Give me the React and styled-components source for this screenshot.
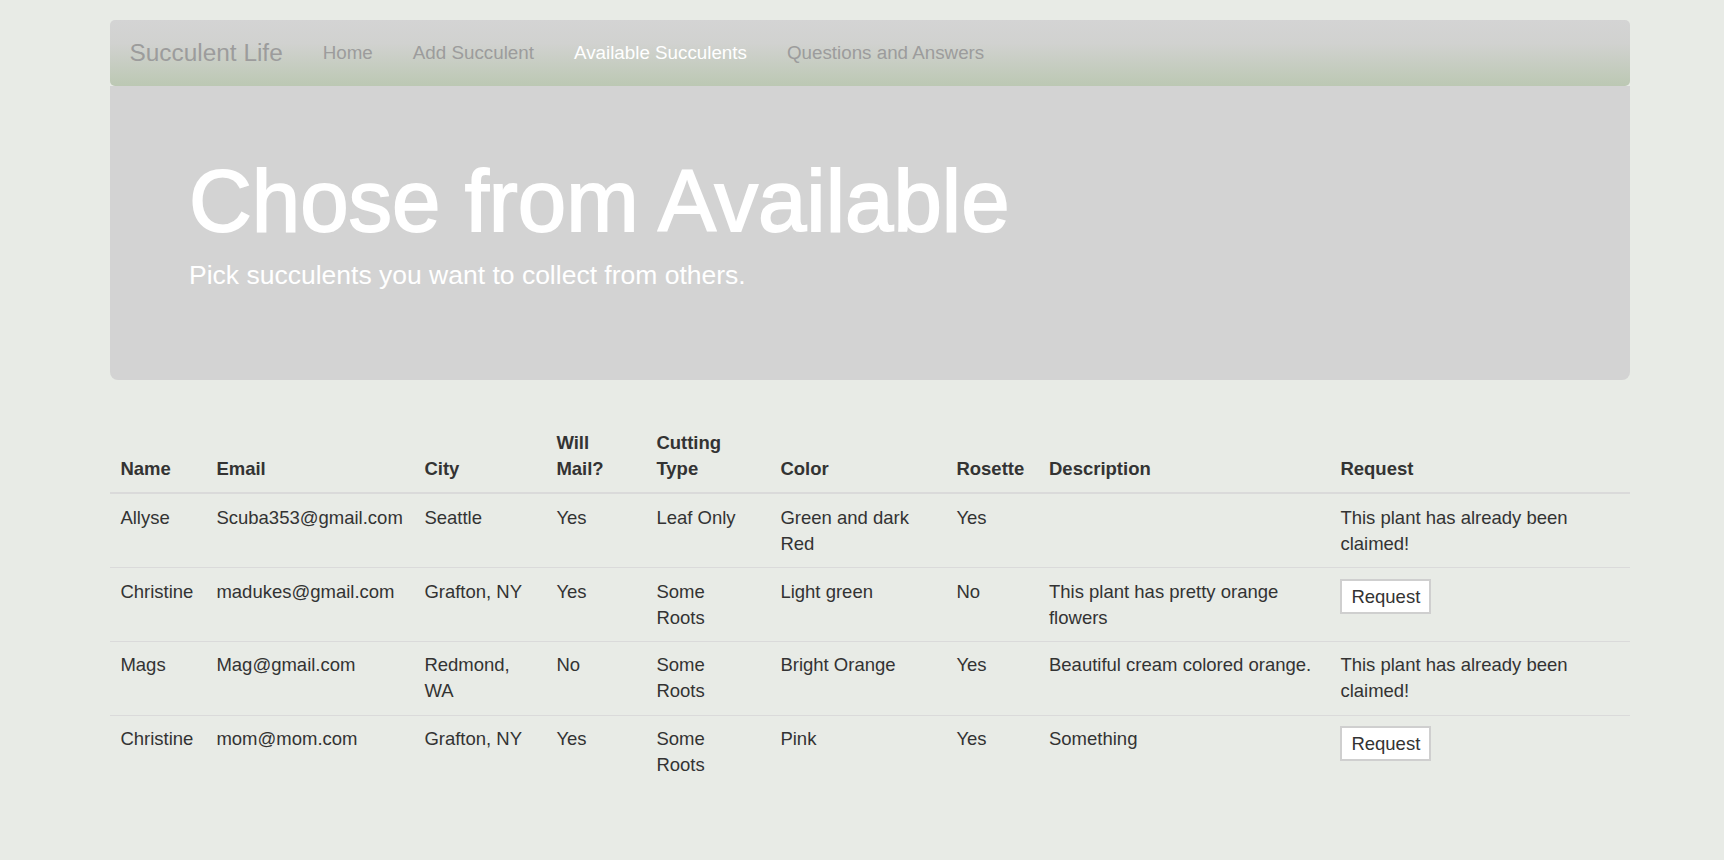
import React from 'react'
import styled, { createGlobalStyle } from 'styled-components'

const GlobalStyle = createGlobalStyle`
  body {
    margin: 0;
    background: #e8ebe6;
    font-family: "Liberation Sans", Arial, sans-serif;
    color: #333;
  }
`

const Container = styled.div`
  width: 1520px;
  margin-left: 110px;
  padding: 20px 0 60px;
`

const Navbar = styled.nav`
  display: flex;
  align-items: center;
  height: 66px;
  border-radius: 5px;
  background: linear-gradient(to bottom, #d4d4d4 0%, #d1d2d0 35%, #bcc8b3 100%);
`

const Brand = styled.a`
  padding: 0 20px 0 19.5px;
  font-size: 24.4px;
  line-height: 26px;
  color: #9c9c9c;
  text-decoration: none;
`

const NavLink = styled.a`
  padding: 0 20px;
  font-size: 18.8px;
  line-height: 26px;
  color: ${(p) => (p.$active ? '#fff' : '#9c9c9c')};
  text-decoration: none;
`

const Jumbotron = styled.header`
  padding: 68px 79px 85px;
  margin-bottom: 40px;
  background: #d3d3d3;
  border-radius: 0 0 8px 8px;
  color: #fff;
`

const Heading = styled.h1`
  margin: 0;
  font-size: 87px;
  line-height: 94px;
  font-weight: 400;
  -webkit-text-stroke: 1.8px #fff;
`

const Lead = styled.p`
  margin: 8px 0 0;
  font-size: 26.5px;
  line-height: 38.6px;
  font-weight: 300;
`

const Table = styled.table`
  width: 100%;
  border-collapse: collapse;
  table-layout: fixed;
  font-size: 18.5px;
  line-height: 26px;
`

const Th = styled.th`
  padding: 10.4px;
  text-align: left;
  vertical-align: bottom;
  font-weight: bold;
  border-bottom: 2px solid #dadada;
`

const Td = styled.td`
  padding: 10.4px ${(p) => p.$padRight || 10.4}px 10.4px 10.4px;
  vertical-align: top;
  border-top: 1px solid #dadada;
`

const RequestButton = styled.button`
  padding: 3px 9px;
  font: inherit;
  line-height: 25px;
  color: #333;
  background: #fff;
  border: 2px solid #cfcfcf;
  border-radius: 0;
`

const columns = [
  { key: 'name', label: 'Name', width: 96 },
  { key: 'email', label: 'Email', width: 208 },
  { key: 'city', label: 'City', width: 132 },
  { key: 'mail', label: 'Will Mail?', width: 100 },
  { key: 'cutting', label: 'Cutting Type', width: 124, padRight: 16 },
  { key: 'color', label: 'Color', width: 176 },
  { key: 'rosette', label: 'Rosette', width: 92.6 },
  { key: 'description', label: 'Description', width: 291.4 },
  { key: 'request', label: 'Request', width: 300 },
]

const plants = [
  {
    id: 1,
    name: 'Allyse',
    email: 'Scuba353@gmail.com',
    city: 'Seattle',
    mail: 'Yes',
    cutting: 'Leaf Only',
    color: 'Green and dark Red',
    rosette: 'Yes',
    description: '',
    claimed: true,
  },
  {
    id: 2,
    name: 'Christine',
    email: 'madukes@gmail.com',
    city: 'Grafton, NY',
    mail: 'Yes',
    cutting: 'Some Roots',
    color: 'Light green',
    rosette: 'No',
    description: 'This plant has pretty orange flowers',
    claimed: false,
  },
  {
    id: 3,
    name: 'Mags',
    email: 'Mag@gmail.com',
    city: 'Redmond, WA',
    mail: 'No',
    cutting: 'Some Roots',
    color: 'Bright Orange',
    rosette: 'Yes',
    description: 'Beautiful cream colored orange.',
    claimed: true,
  },
  {
    id: 4,
    name: 'Christine',
    email: 'mom@mom.com',
    city: 'Grafton, NY',
    mail: 'Yes',
    cutting: 'Some Roots',
    color: 'Pink',
    rosette: 'Yes',
    description: 'Something',
    claimed: false,
  },
]

const links = ['Home', 'Add Succulent', 'Available Succulents', 'Questions and Answers']

const App = () => (
  <>
    <GlobalStyle />
    <Container>
      <Navbar>
        <Brand href="#">Succulent Life</Brand>
        {links.map((link) => (
          <NavLink key={link} href="#" $active={link === 'Available Succulents'}>
            {link}
          </NavLink>
        ))}
      </Navbar>

      <Jumbotron>
        <Heading>Chose from Available</Heading>
        <Lead>Pick succulents you want to collect from others.</Lead>
      </Jumbotron>

      <Table>
        <colgroup>
          {columns.map((col) => (
            <col key={col.key} style={{ width: col.width }} />
          ))}
        </colgroup>
        <thead>
          <tr>
            {columns.map((col) => (
              <Th key={col.key}>{col.label}</Th>
            ))}
          </tr>
        </thead>
        <tbody>
          {plants.map((plant) => (
            <tr key={plant.id}>
              {columns.map((col) =>
                col.key === 'request' ? (
                  <Td key={col.key}>
                    {plant.claimed ? (
                      'This plant has already been claimed!'
                    ) : (
                      <RequestButton type="button">Request</RequestButton>
                    )}
                  </Td>
                ) : (
                  <Td key={col.key} $padRight={col.padRight}>
                    {plant[col.key]}
                  </Td>
                )
              )}
            </tr>
          ))}
        </tbody>
      </Table>
    </Container>
  </>
)

export default App
